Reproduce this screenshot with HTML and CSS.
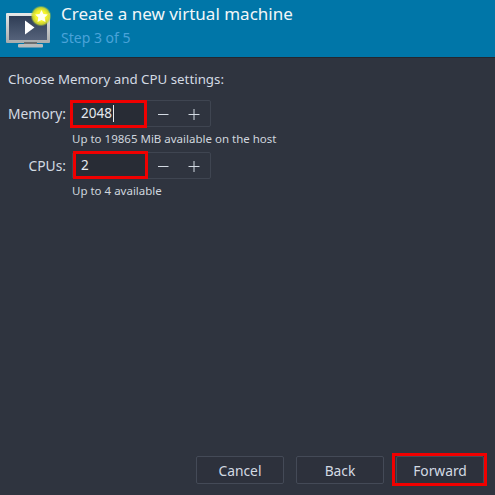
FILE: index.html
```html
<!DOCTYPE html>
<html lang="en">
<head>
<meta charset="utf-8">
<title>Create a new virtual machine</title>
<link rel="stylesheet" href="styles.css">
</head>
<body>
<div class="window">
  <header class="header">
    <svg class="logo" width="50" height="46" viewBox="0 0 50 46">
      <defs>
        <linearGradient id="scr" x1="0" y1="0" x2="0" y2="1"><stop offset="0" stop-color="#2f3d55"/><stop offset="1" stop-color="#55627a"/></linearGradient>
        <linearGradient id="frm" x1="0" y1="0" x2="0" y2="1"><stop offset="0" stop-color="#e6e8e8"/><stop offset="1" stop-color="#a9acac"/></linearGradient>
        <radialGradient id="glow"><stop offset="0.5" stop-color="#f6f52e"/><stop offset="0.8" stop-color="#d6dc2a" stop-opacity="0.9"/><stop offset="1" stop-color="#8fc04a" stop-opacity="0"/></radialGradient>
      </defs>
      <rect x="5" y="10" width="44" height="30" rx="1" fill="url(#frm)"/>
      <rect x="8" y="13" width="38" height="24" fill="url(#scr)"/>
      <rect x="23" y="39" width="13" height="2.5" fill="#6b6f70"/>
      <rect x="17" y="41" width="25" height="3.5" rx="1" fill="#b9bcbc"/>
      <path d="M24 17.5 L33.5 24.5 L24 31.5 Z" fill="#fff"/>
      <circle cx="40" cy="13" r="10.500" fill="url(#glow)"/>
      <path d="M40.500 7 L42.500 11 L46.800 11.600 L43.700 14.600 L44.500 19 L40.500 17 L36.500 19 L37.300 14.600 L34.200 11.600 L38.500 11 Z" fill="#fffff0"/>
    </svg>
    <div class="titles">
      <div class="title">Create a new virtual machine</div>
      <div class="step">Step 3 of 5</div>
    </div>
  </header>
  <main class="content">
    <p class="intro">Choose Memory and CPU settings:</p>
    <div class="form">
      <label class="field-label">Memory:</label>
      <div class="spin">
        <div class="entry"><span>2048</span><i class="caret"></i><b class="mark mark-mem"></b></div>
        <button class="step-btn" aria-label="decrease"><svg width="12" height="12" viewBox="0 0 12 12"><path d="M1 6.5H11.500" stroke="#d3dae3" stroke-width="1"/></svg></button>
        <button class="step-btn" aria-label="increase"><svg width="12" height="12" viewBox="0 0 12 12"><path d="M0.500 6.500H11.500M6 1V12" stroke="#d3dae3" stroke-width="1"/></svg></button>
      </div>
      <div class="hint hint-mem">Up to 19865 MiB available on the host</div>
      <label class="field-label">CPUs:</label>
      <div class="spin">
        <div class="entry"><span>2</span><b class="mark mark-cpu"></b></div>
        <button class="step-btn" aria-label="decrease"><svg width="12" height="12" viewBox="0 0 12 12"><path d="M1 6.5H11.500" stroke="#d3dae3" stroke-width="1"/></svg></button>
        <button class="step-btn" aria-label="increase"><svg width="12" height="12" viewBox="0 0 12 12"><path d="M0.500 6.500H11.500M6 1V12" stroke="#d3dae3" stroke-width="1"/></svg></button>
      </div>
      <div class="hint">Up to 4 available</div>
    </div>
  </main>
  <footer class="footer">
    <button class="btn">Cancel</button>
    <button class="btn">Back</button>
    <button class="btn">Forward<b class="mark mark-fwd"></b></button>
  </footer>
</div>
</body>
</html>
```
FILE: styles.css
```css
* { box-sizing: border-box; }
html, body { margin: 0; height: 100%; }
body { background: #2f343f; color: #d3dae3; font-family: "Noto Sans", "Open Sans", sans-serif; font-size: 13.500px; }
.window { height: 495px; display: flex; flex-direction: column; }
.header { height: 58px; flex: none; background: #0076a8; display: flex; align-items: flex-start; border-bottom: 1px solid #232730; }
.logo { flex: none; margin-top: 3px; margin-left: 1px; }
.titles { margin-left: 10px; padding-top: 3px; }
.title { font-size: 17px; line-height: 22px; color: #f2f6f8; }
.step { font-size: 14px; line-height: 18px; margin-top: 4px; color: #4aa3d9; }
.content { flex: 1; padding: 12px 8px 0; }
.intro { margin: 0 0 12px; line-height: 18px; font-size: 13.300px; }
.form { display: grid; grid-template-columns: 64px 139px; }
.field-label { justify-self: end; align-self: center; line-height: 26px; margin-right: 6px; white-space: nowrap; font-size: 13.800px; }
.spin { display: flex; height: 27px; background: #2f343f; border: 1px solid #3f4551; border-radius: 2px; }
.entry { position: relative; width: 74px; padding-left: 8px; background: #282c35; display: flex; align-items: center; line-height: 25px; color: #e4e9ef; }
.caret { width: 1px; height: 17px; background: #e8ecf0; margin-left: 1px; }
.step-btn { width: 31px; flex: none; padding: 0; border: 0; background: transparent; display: flex; align-items: center; justify-content: center; }
.hint { grid-column: 2; font-size: 11.500px; line-height: 16px; margin: 4px 0 5px; white-space: nowrap; color: #cfd6de; }
.mark { position: absolute; border: 3px solid #f00000; pointer-events: none; }
.mark-mem { left: -3px; top: -1px; width: 77px; height: 28px; }
.mark-cpu { left: 0; top: -2px; width: 75px; height: 28px; }
.footer { flex: none; display: flex; justify-content: flex-end; gap: 12px; padding: 0 11px 11px 0; }
.btn { position: relative; width: 88px; height: 28px; padding: 0; background: #2d313c; border: 1px solid #444a57; border-radius: 2px; color: #d3dae3; font: inherit; font-size: 13.800px; }
.mark-fwd { left: -5px; top: -4px; width: 95px; height: 33px; }
```
